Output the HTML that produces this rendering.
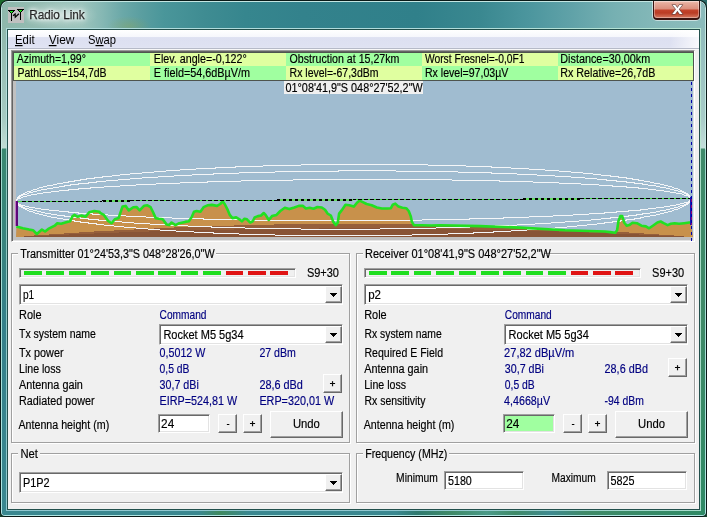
<!DOCTYPE html><html><head><meta charset="utf-8"><title>Radio Link</title><style>
html,body{margin:0;padding:0}
body{width:709px;height:517px;overflow:hidden;background:#fff;position:relative;font-family:"Liberation Sans", Arial, sans-serif;font-size:12.5px}
.a{position:absolute;box-sizing:border-box}
.gb{position:absolute;box-sizing:border-box;border:1px solid #a0a0a0;box-shadow:1px 1px 0 #fff, inset 1px 1px 0 #fff}
.sunk{position:absolute;box-sizing:border-box;background:#fff;border:1px solid;border-color:#a0a0a0 #fff #fff #a0a0a0;box-shadow:inset 1px 1px 0 #696969, inset -1px -1px 0 #e3e3e3}
.btn{position:absolute;box-sizing:border-box;background:#f0f0f0;border:1px solid;border-color:#fff #696969 #696969 #fff;box-shadow:inset -1px -1px 0 #a0a0a0, inset 1px 1px 0 #f0f0f0}
.cap{position:absolute;background:#f0f0f0;height:13px}
svg text{font-family:"Liberation Sans", Arial, sans-serif;white-space:pre}
svg text.m{stroke-width:.18px}
svg text.g{stroke:#000;stroke-width:.5px}
</style></head><body>
<div class="a" style="left:0;top:0;width:707px;height:12px;background:linear-gradient(to right,#1a6a2c 0,#1a6a2c 50%,#2a6a68 50%)"></div>
<div class="a" style="left:0;top:505px;width:707px;height:12px;background:#16402c"></div>
<div class="a" style="left:0;top:0;width:707px;height:517px;border-radius:8px 8px 5px 5px;background:#0a1a18"></div>
<div class="a" style="left:1px;top:1px;width:705px;height:515px;border-radius:7px 7px 4px 4px;background:linear-gradient(to bottom,#c4e6e2 0,#c8eae4 148px,#9fd8cc 149px,#b0e6e4 100%)"></div>
<div class="a" id="glass" style="left:2px;top:2px;width:703px;height:513px;border-radius:6px 6px 3px 3px;overflow:hidden;background:#3a8890">
<div class="a" style="left:0;top:0;width:703px;height:26px;background:radial-gradient(ellipse 22px 10px at 127px 24px, rgba(150,165,70,.32), rgba(150,165,70,0) 100%),radial-gradient(ellipse 40px 14px at 56px 13px, rgba(255,255,255,.35), rgba(255,255,255,0) 100%),linear-gradient(to right,#8eb8ac 0,#94bcb2 5%,#9cc4bc 11.4%,#86b8b4 14.2%,#6aa8a8 17.2%,#5a9ea0 19.9%,#4a969a 23%,#3f8c92 28.9%,#36868e 34.7%,#33828c 42.7%,#30808a 59%,#3a8890 68%,#4c969e 75%,#60a2a8 81%,#76b0b2 87%,#84b8b8 93%,#8cbcbc 100%)"></div>
<div class="a" style="left:0;top:26px;width:6px;height:487px;background:linear-gradient(to bottom,#90b8ac 0,#a6cac2 90px,#c0dcd4 120px,#3a8870 121px,#35808a 300px,#3a8890 100%)"></div>
<div class="a" style="left:697px;top:26px;width:6px;height:487px;background:linear-gradient(to bottom,#90bcbc 0,#a8ccc8 90px,#c4deda 120px,#3f8a6a 121px,#3f8a68 300px,#2f8a66 100%)"></div>
<div class="a" style="left:0;top:507px;width:703px;height:6px;background:linear-gradient(to right,#3a8890 0,#3a8890 28%,#3f8a60 31%,#3a8890 35%,#3a8890 56%,#2f7a70 59%,#3f8a68 64%,#4a9a88 69%,#3f8a68 73%,#3f8a90 78%,#3f8a68 83%,#2f8a66 100%)"></div>
</div>
<div class="a" style="left:6px;top:28px;width:695px;height:483px;background:linear-gradient(to right,rgba(255,255,255,0) 0,rgba(255,255,255,0) 60%,rgba(190,240,200,.5) 100%),linear-gradient(to bottom,#b0dcdc 0,#b8e0dc 120px,#8fc8c0 121px,#90c8d0 100%)"></div>
<div class="a" style="left:7px;top:29px;width:693px;height:481px;background:#23504c"></div>
<div class="a" style="left:8px;top:30px;width:691px;height:479px;background:#f0f0f0"></div>
<div class="a" style="left:652px;top:1px;width:49px;height:20px;border-radius:0 0 5px 5px;background:rgba(255,255,255,.55)"></div>
<div class="a" style="left:653px;top:1px;width:47px;height:19px;border-radius:0 0 4px 4px;background:#3a1410"></div>
<div class="a" style="left:654px;top:1px;width:45px;height:17px;border-radius:0 0 3px 3px;background:linear-gradient(to bottom,#f0c8bc 0,#e6ac9c 12%,#da8e7c 48%,#c4442c 52%,#ba3c24 70%,#d67860 100%);box-shadow:inset 0 0 0 1px rgba(255,255,255,.35)"></div>
<div class="a" style="left:8px;top:30px;width:691px;height:18px;background:linear-gradient(to bottom,#fff 0,#f6f7fc 38%,#dde0f1 42%,#dfe2f2 92%,#e4e6f3 100%)"></div>
<div class="a" style="left:8px;top:48px;width:691px;height:1px;background:#b6bac8"></div>
<div class="a" style="left:8px;top:49px;width:691px;height:1px;background:#f8f8f8"></div>
<div class="a" style="left:670px;top:30px;width:29px;height:18px;background:linear-gradient(to right,rgba(255,255,255,0),rgba(255,255,255,.8))"></div>
<div class="a" style="left:11px;top:50px;width:684px;height:192px;background:#c0c0c0;border:1px solid;border-color:#9a9a9a #fff #fff #9a9a9a;box-shadow:inset 1px 1px 0 #646464, inset -1px -1px 0 #e3e3e3"></div>
<div class="a" style="left:13px;top:52px;width:681px;height:29px;background:#4e544e"></div>
<div class="a" style="left:14px;top:53px;width:136px;height:13px;background:#a0ffa0"></div>
<div class="a" style="left:14px;top:66px;width:136px;height:14px;background:#e0ffa0"></div>
<div class="a" style="left:150px;top:53px;width:136px;height:13px;background:#e0ffa0"></div>
<div class="a" style="left:150px;top:66px;width:136px;height:14px;background:#a0ffa0"></div>
<div class="a" style="left:286px;top:53px;width:135.5px;height:13px;background:#a0ffa0"></div>
<div class="a" style="left:286px;top:66px;width:135.5px;height:14px;background:#e0ffa0"></div>
<div class="a" style="left:421.5px;top:53px;width:136.0px;height:13px;background:#e0ffa0"></div>
<div class="a" style="left:421.5px;top:66px;width:136.0px;height:14px;background:#a0ffa0"></div>
<div class="a" style="left:557.5px;top:53px;width:135.5px;height:13px;background:#a0ffa0"></div>
<div class="a" style="left:557.5px;top:66px;width:135.5px;height:14px;background:#e0ffa0"></div>
<svg width="709" height="517" viewBox="0 0 709 517" style="position:absolute;left:0;top:0">
<defs><clipPath id="cc"><rect x="15" y="81" width="678" height="156"/></clipPath>
<clipPath id="tc"><polygon points="16,237 16.4,226.4 22.8,228.3 29.2,229.6 33.0,230.2 36.8,234.0 41.9,229.6 45.1,231.5 48.3,228.9 54.7,225.7 57.3,223.2 61.1,223.8 66.2,222.3 70.0,221.3 72.6,216.1 74.5,214.9 77.7,216.8 81.5,215.5 85.4,216.8 89.2,212.3 94.3,211.0 99.4,211.7 100.1,213.0 103.9,214.9 107.8,220.6 111.6,223.2 114.8,219.3 118.6,218.1 120.5,212.3 122.5,206.6 125.7,205.9 128.8,210.4 133.3,207.2 136.5,207.0 139.7,210.4 144.2,205.7 147.4,205.3 150.6,207.2 153.1,212.3 155.7,218.1 158.9,218.7 162.7,219.3 166.5,224.4 169.1,225.1 171.6,222.5 175.5,225.1 179.3,223.2 185.1,221.9 188.9,221.3 191.5,217.4 194.0,211.7 196.6,211.0 200.4,211.7 203.6,207.2 207.5,205.3 211.9,204.9 217.0,205.9 220.2,204.0 222.8,201.5 224.7,204.0 227.3,209.1 229.8,214.9 232.4,218.1 236.2,217.4 239.4,219.3 241.9,221.3 244.5,218.7 247.0,219.3 250.2,222.5 252.8,221.3 254.7,217.4 257.9,216.1 261.1,215.5 263.7,213.0 265.6,214.9 268.8,220.0 272.0,216.1 276.5,214.9 280.3,211.0 284.8,207.8 289.3,209.1 294.4,207.5 298.8,205.9 302.7,205.7 305.9,208.5 309.7,207.8 313.5,208.7 317.4,207.0 321.8,207.5 325.0,209.8 327.6,213.6 330.8,215.5 333.3,221.9 335.9,225.1 337.8,222.5 339.1,213.6 341.6,210.4 345.5,204.7 349.3,205.3 353.8,206.6 357.0,202.7 359.6,200.6 362.8,202.1 366.6,204.0 371.7,205.3 376.8,207.5 381.9,208.5 387.0,208.5 390.9,208.2 392.8,204.7 395.3,203.6 398.5,206.6 402.4,207.8 406.2,208.2 408.7,211.0 410.7,216.1 411.9,221.9 413.9,225.1 421.5,225.3 431.7,225.5 440.0,225.2 480.0,226.1 520.0,227.6 565.0,230.2 605.0,231.5 610.1,232.1 615.2,232.7 617.1,230.2 618.4,221.3 620.3,216.1 622.2,216.1 624.2,222.5 626.7,225.7 629.3,225.1 632.5,222.8 636.9,223.2 641.4,225.7 645.9,226.4 649.1,228.3 652.9,225.7 657.4,222.5 660.6,221.5 663.7,223.2 667.6,225.1 670.8,223.8 674.6,223.2 679.1,223.8 684.2,223.2 689.3,222.5 691.0,222.5 693.0,237"/></clipPath></defs>
<rect x="16" y="81" width="677" height="156" fill="#a0bcd0"/>
<g clip-path="url(#cc)">
<polygon points="16,237 16.4,226.4 22.8,228.3 29.2,229.6 33.0,230.2 36.8,234.0 41.9,229.6 45.1,231.5 48.3,228.9 54.7,225.7 57.3,223.2 61.1,223.8 66.2,222.3 70.0,221.3 72.6,216.1 74.5,214.9 77.7,216.8 81.5,215.5 85.4,216.8 89.2,212.3 94.3,211.0 99.4,211.7 100.1,213.0 103.9,214.9 107.8,220.6 111.6,223.2 114.8,219.3 118.6,218.1 120.5,212.3 122.5,206.6 125.7,205.9 128.8,210.4 133.3,207.2 136.5,207.0 139.7,210.4 144.2,205.7 147.4,205.3 150.6,207.2 153.1,212.3 155.7,218.1 158.9,218.7 162.7,219.3 166.5,224.4 169.1,225.1 171.6,222.5 175.5,225.1 179.3,223.2 185.1,221.9 188.9,221.3 191.5,217.4 194.0,211.7 196.6,211.0 200.4,211.7 203.6,207.2 207.5,205.3 211.9,204.9 217.0,205.9 220.2,204.0 222.8,201.5 224.7,204.0 227.3,209.1 229.8,214.9 232.4,218.1 236.2,217.4 239.4,219.3 241.9,221.3 244.5,218.7 247.0,219.3 250.2,222.5 252.8,221.3 254.7,217.4 257.9,216.1 261.1,215.5 263.7,213.0 265.6,214.9 268.8,220.0 272.0,216.1 276.5,214.9 280.3,211.0 284.8,207.8 289.3,209.1 294.4,207.5 298.8,205.9 302.7,205.7 305.9,208.5 309.7,207.8 313.5,208.7 317.4,207.0 321.8,207.5 325.0,209.8 327.6,213.6 330.8,215.5 333.3,221.9 335.9,225.1 337.8,222.5 339.1,213.6 341.6,210.4 345.5,204.7 349.3,205.3 353.8,206.6 357.0,202.7 359.6,200.6 362.8,202.1 366.6,204.0 371.7,205.3 376.8,207.5 381.9,208.5 387.0,208.5 390.9,208.2 392.8,204.7 395.3,203.6 398.5,206.6 402.4,207.8 406.2,208.2 408.7,211.0 410.7,216.1 411.9,221.9 413.9,225.1 421.5,225.3 431.7,225.5 440.0,225.2 480.0,226.1 520.0,227.6 565.0,230.2 605.0,231.5 610.1,232.1 615.2,232.7 617.1,230.2 618.4,221.3 620.3,216.1 622.2,216.1 624.2,222.5 626.7,225.7 629.3,225.1 632.5,222.8 636.9,223.2 641.4,225.7 645.9,226.4 649.1,228.3 652.9,225.7 657.4,222.5 660.6,221.5 663.7,223.2 667.6,225.1 670.8,223.8 674.6,223.2 679.1,223.8 684.2,223.2 689.3,222.5 691.0,222.5 693.0,237" fill="#c8914b"/>
<g clip-path="url(#tc)" shape-rendering="crispEdges"><polygon points="16.0,237 16.0,237 21.0,237 26.0,236 31.0,236 36.0,235 41.0,235 46.0,235 51.0,234 56.0,234 61.0,234 66.0,233 71.0,233 76.0,233 81.0,232 86.0,232 91.0,232 96.0,231 101.0,231 106.0,231 111.0,231 116.0,230 121.0,230 126.0,230 131.0,230 136.0,229 141.0,229 146.0,229 151.0,229 156.0,228 161.0,228 166.0,228 171.0,228 176.0,227 181.0,227 186.0,227 191.0,227 196.0,227 201.0,226 206.0,226 211.0,226 216.0,226 221.0,226 226.0,226 231.0,226 236.0,225 241.0,225 246.0,225 251.0,225 256.0,225 261.0,225 266.0,225 271.0,225 276.0,224 281.0,224 286.0,224 291.0,224 296.0,224 301.0,224 306.0,224 311.0,224 316.0,224 321.0,224 326.0,224 331.0,224 336.0,224 341.0,224 346.0,224 351.0,224 356.0,224 361.0,224 366.0,224 371.0,224 376.0,224 381.0,224 386.0,224 391.0,224 396.0,224 401.0,224 406.0,224 411.0,224 416.0,224 421.0,224 426.0,224 431.0,224 436.0,225 441.0,225 446.0,225 451.0,225 456.0,225 461.0,225 466.0,225 471.0,225 476.0,226 481.0,226 486.0,226 491.0,226 496.0,226 501.0,226 506.0,226 511.0,227 516.0,227 521.0,227 526.0,227 531.0,227 536.0,228 541.0,228 546.0,228 551.0,228 556.0,229 561.0,229 566.0,229 571.0,229 576.0,230 581.0,230 586.0,230 591.0,230 596.0,231 601.0,231 606.0,231 611.0,231 616.0,232 621.0,232 626.0,232 631.0,233 636.0,233 641.0,233 646.0,234 651.0,234 656.0,234 661.0,235 666.0,235 671.0,235 676.0,236 681.0,236 686.0,237 691.0,237 691.0,237" fill="#965f3a"/>
<polygon points="16.0,237 16.0,237 21.0,237 26.0,236 31.0,236 36.0,236 41.0,236 46.0,236 51.0,235 56.0,235 61.0,235 66.0,235 71.0,234 76.0,234 81.0,234 86.0,234 91.0,234 96.0,233 101.0,233 106.0,233 111.0,233 116.0,233 121.0,232 126.0,232 131.0,232 136.0,232 141.0,232 146.0,232 151.0,231 156.0,231 161.0,231 166.0,231 171.0,231 176.0,231 181.0,231 186.0,231 191.0,230 196.0,230 201.0,230 206.0,230 211.0,230 216.0,230 221.0,230 226.0,230 231.0,230 236.0,229 241.0,229 246.0,229 251.0,229 256.0,229 261.0,229 266.0,229 271.0,229 276.0,229 281.0,229 286.0,229 291.0,229 296.0,229 301.0,229 306.0,229 311.0,229 316.0,229 321.0,228 326.0,228 331.0,228 336.0,228 341.0,228 346.0,228 351.0,228 356.0,228 361.0,228 366.0,228 371.0,228 376.0,228 381.0,228 386.0,228 391.0,229 396.0,229 401.0,229 406.0,229 411.0,229 416.0,229 421.0,229 426.0,229 431.0,229 436.0,229 441.0,229 446.0,229 451.0,229 456.0,229 461.0,229 466.0,229 471.0,229 476.0,230 481.0,230 486.0,230 491.0,230 496.0,230 501.0,230 506.0,230 511.0,230 516.0,230 521.0,231 526.0,231 531.0,231 536.0,231 541.0,231 546.0,231 551.0,231 556.0,231 561.0,232 566.0,232 571.0,232 576.0,232 581.0,232 586.0,232 591.0,233 596.0,233 601.0,233 606.0,233 611.0,233 616.0,234 621.0,234 626.0,234 631.0,234 636.0,234 641.0,235 646.0,235 651.0,235 656.0,235 661.0,236 666.0,236 671.0,236 676.0,236 681.0,236 686.0,237 691.0,237 691.0,237" fill="#885436"/></g>
<polyline points="16.0,201.5 18.0,198.5 20.0,198.5 22.0,197.5 23.9,196.5 25.9,196.5 27.9,195.5 29.9,195.5 31.9,194.5 33.9,194.5 35.9,194.5 37.8,193.5 39.8,193.5 41.8,193.5 43.8,192.5 45.8,192.5 47.8,192.5 49.8,192.5 51.7,191.5 53.7,191.5 55.7,191.5 57.7,191.5 59.7,190.5 61.7,190.5 63.6,190.5 65.6,190.5 67.6,190.5 69.6,189.5 71.6,189.5 73.6,189.5 75.6,189.5 77.5,189.5 79.5,188.5 81.5,188.5 83.5,188.5 85.5,188.5 87.5,188.5 89.5,188.5 91.4,187.5 93.4,187.5 95.4,187.5 97.4,187.5 99.4,187.5 101.4,187.5 103.4,187.5 105.3,186.5 107.3,186.5 109.3,186.5 111.3,186.5 113.3,186.5 115.3,186.5 117.2,186.5 119.2,186.5 121.2,185.5 123.2,185.5 125.2,185.5 127.2,185.5 129.2,185.5 131.1,185.5 133.1,185.5 135.1,185.5 137.1,184.5 139.1,184.5 141.1,184.5 143.1,184.5 145.0,184.5 147.0,184.5 149.0,184.5 151.0,184.5 153.0,184.5 155.0,184.5 157.0,183.5 158.9,183.5 160.9,183.5 162.9,183.5 164.9,183.5 166.9,183.5 168.9,183.5 170.9,183.5 172.8,183.5 174.8,183.5 176.8,183.5 178.8,183.5 180.8,182.5 182.8,182.5 184.8,182.5 186.7,182.5 188.7,182.5 190.7,182.5 192.7,182.5 194.7,182.5 196.7,182.5 198.6,182.5 200.6,182.5 202.6,182.5 204.6,182.5 206.6,182.5 208.6,181.5 210.6,181.5 212.5,181.5 214.5,181.5 216.5,181.5 218.5,181.5 220.5,181.5 222.5,181.5 224.5,181.5 226.4,181.5 228.4,181.5 230.4,181.5 232.4,181.5 234.4,181.5 236.4,181.5 238.4,181.5 240.3,181.5 242.3,180.5 244.3,180.5 246.3,180.5 248.3,180.5 250.3,180.5 252.2,180.5 254.2,180.5 256.2,180.5 258.2,180.5 260.2,180.5 262.2,180.5 264.2,180.5 266.1,180.5 268.1,180.5 270.1,180.5 272.1,180.5 274.1,180.5 276.1,180.5 278.1,180.5 280.0,180.5 282.0,180.5 284.0,180.5 286.0,180.5 288.0,180.5 290.0,180.5 292.0,180.5 293.9,179.5 295.9,179.5 297.9,179.5 299.9,179.5 301.9,179.5 303.9,179.5 305.9,179.5 307.8,179.5 309.8,179.5 311.8,179.5 313.8,179.5 315.8,179.5 317.8,179.5 319.8,179.5 321.7,179.5 323.7,179.5 325.7,179.5 327.7,179.5 329.7,179.5 331.7,179.5 333.6,179.5 335.6,179.5 337.6,179.5 339.6,179.5 341.6,179.5 343.6,179.5 345.6,179.5 347.5,179.5 349.5,179.5 351.5,179.5 353.5,179.5 355.5,179.5 357.5,179.5 359.5,179.5 361.4,179.5 363.4,179.5 365.4,179.5 367.4,179.5 369.4,179.5 371.4,179.5 373.4,179.5 375.3,179.5 377.3,179.5 379.3,179.5 381.3,179.5 383.3,179.5 385.3,179.5 387.3,179.5 389.2,179.5 391.2,179.5 393.2,179.5 395.2,179.5 397.2,179.5 399.2,179.5 401.1,179.5 403.1,179.5 405.1,179.5 407.1,179.5 409.1,179.5 411.1,179.5 413.1,179.5 415.0,179.5 417.0,179.5 419.0,179.5 421.0,179.5 423.0,179.5 425.0,179.5 427.0,179.5 428.9,179.5 430.9,179.5 432.9,179.5 434.9,179.5 436.9,179.5 438.9,179.5 440.9,179.5 442.8,179.5 444.8,179.5 446.8,179.5 448.8,179.5 450.8,179.5 452.8,180.5 454.8,180.5 456.7,180.5 458.7,180.5 460.7,180.5 462.7,180.5 464.7,180.5 466.7,180.5 468.6,180.5 470.6,180.5 472.6,180.5 474.6,180.5 476.6,180.5 478.6,180.5 480.6,180.5 482.5,180.5 484.5,180.5 486.5,180.5 488.5,180.5 490.5,180.5 492.5,180.5 494.5,180.5 496.4,180.5 498.4,180.5 500.4,181.5 502.4,181.5 504.4,181.5 506.4,181.5 508.4,181.5 510.3,181.5 512.3,181.5 514.3,181.5 516.3,181.5 518.3,181.5 520.3,181.5 522.2,181.5 524.2,181.5 526.2,181.5 528.2,181.5 530.2,181.5 532.2,181.5 534.2,182.5 536.1,182.5 538.1,182.5 540.1,182.5 542.1,182.5 544.1,182.5 546.1,182.5 548.1,182.5 550.0,182.5 552.0,182.5 554.0,182.5 556.0,182.5 558.0,182.5 560.0,183.5 562.0,183.5 563.9,183.5 565.9,183.5 567.9,183.5 569.9,183.5 571.9,183.5 573.9,183.5 575.9,183.5 577.8,183.5 579.8,183.5 581.8,184.5 583.8,184.5 585.8,184.5 587.8,184.5 589.8,184.5 591.7,184.5 593.7,184.5 595.7,184.5 597.7,184.5 599.7,185.5 601.7,185.5 603.6,185.5 605.6,185.5 607.6,185.5 609.6,185.5 611.6,185.5 613.6,186.5 615.6,186.5 617.5,186.5 619.5,186.5 621.5,186.5 623.5,186.5 625.5,186.5 627.5,187.5 629.5,187.5 631.4,187.5 633.4,187.5 635.4,187.5 637.4,187.5 639.4,188.5 641.4,188.5 643.4,188.5 645.3,188.5 647.3,188.5 649.3,189.5 651.3,189.5 653.3,189.5 655.3,189.5 657.2,190.5 659.2,190.5 661.2,190.5 663.2,190.5 665.2,191.5 667.2,191.5 669.2,191.5 671.1,192.5 673.1,192.5 675.1,192.5 677.1,193.5 679.1,193.5 681.1,193.5 683.1,194.5 685.0,195.5 687.0,195.5 689.0,196.5 691.0,198.5" fill="none" stroke="#f4f6f8" stroke-width="1" shape-rendering="crispEdges"/>
<polyline points="16.0,201.5 18.0,203.5 20.0,204.5 22.0,205.5 23.9,205.5 25.9,206.5 27.9,206.5 29.9,207.5 31.9,207.5 33.9,207.5 35.9,208.5 37.8,208.5 39.8,208.5 41.8,209.5 43.8,209.5 45.8,209.5 47.8,209.5 49.8,210.5 51.7,210.5 53.7,210.5 55.7,210.5 57.7,210.5 59.7,211.5 61.7,211.5 63.6,211.5 65.6,211.5 67.6,211.5 69.6,212.5 71.6,212.5 73.6,212.5 75.6,212.5 77.5,212.5 79.5,213.5 81.5,213.5 83.5,213.5 85.5,213.5 87.5,213.5 89.5,213.5 91.4,213.5 93.4,214.5 95.4,214.5 97.4,214.5 99.4,214.5 101.4,214.5 103.4,214.5 105.3,214.5 107.3,214.5 109.3,215.5 111.3,215.5 113.3,215.5 115.3,215.5 117.2,215.5 119.2,215.5 121.2,215.5 123.2,215.5 125.2,215.5 127.2,216.5 129.2,216.5 131.1,216.5 133.1,216.5 135.1,216.5 137.1,216.5 139.1,216.5 141.1,216.5 143.1,216.5 145.0,216.5 147.0,217.5 149.0,217.5 151.0,217.5 153.0,217.5 155.0,217.5 157.0,217.5 158.9,217.5 160.9,217.5 162.9,217.5 164.9,217.5 166.9,217.5 168.9,217.5 170.9,217.5 172.8,218.5 174.8,218.5 176.8,218.5 178.8,218.5 180.8,218.5 182.8,218.5 184.8,218.5 186.7,218.5 188.7,218.5 190.7,218.5 192.7,218.5 194.7,218.5 196.7,218.5 198.6,218.5 200.6,218.5 202.6,218.5 204.6,219.5 206.6,219.5 208.6,219.5 210.6,219.5 212.5,219.5 214.5,219.5 216.5,219.5 218.5,219.5 220.5,219.5 222.5,219.5 224.5,219.5 226.4,219.5 228.4,219.5 230.4,219.5 232.4,219.5 234.4,219.5 236.4,219.5 238.4,219.5 240.3,219.5 242.3,219.5 244.3,219.5 246.3,219.5 248.3,219.5 250.3,220.5 252.2,220.5 254.2,220.5 256.2,220.5 258.2,220.5 260.2,220.5 262.2,220.5 264.2,220.5 266.1,220.5 268.1,220.5 270.1,220.5 272.1,220.5 274.1,220.5 276.1,220.5 278.1,220.5 280.0,220.5 282.0,220.5 284.0,220.5 286.0,220.5 288.0,220.5 290.0,220.5 292.0,220.5 293.9,220.5 295.9,220.5 297.9,220.5 299.9,220.5 301.9,220.5 303.9,220.5 305.9,220.5 307.8,220.5 309.8,220.5 311.8,220.5 313.8,220.5 315.8,220.5 317.8,220.5 319.8,220.5 321.7,220.5 323.7,220.5 325.7,220.5 327.7,220.5 329.7,220.5 331.7,220.5 333.6,220.5 335.6,220.5 337.6,220.5 339.6,220.5 341.6,220.5 343.6,220.5 345.6,220.5 347.5,220.5 349.5,220.5 351.5,220.5 353.5,220.5 355.5,220.5 357.5,220.5 359.5,220.5 361.4,220.5 363.4,220.5 365.4,220.5 367.4,220.5 369.4,220.5 371.4,220.5 373.4,220.5 375.3,220.5 377.3,220.5 379.3,220.5 381.3,220.5 383.3,220.5 385.3,220.5 387.3,220.5 389.2,220.5 391.2,220.5 393.2,220.5 395.2,220.5 397.2,220.5 399.2,220.5 401.1,220.5 403.1,220.5 405.1,220.5 407.1,220.5 409.1,220.5 411.1,220.5 413.1,220.5 415.0,220.5 417.0,220.5 419.0,220.5 421.0,220.5 423.0,219.5 425.0,219.5 427.0,219.5 428.9,219.5 430.9,219.5 432.9,219.5 434.9,219.5 436.9,219.5 438.9,219.5 440.9,219.5 442.8,219.5 444.8,219.5 446.8,219.5 448.8,219.5 450.8,219.5 452.8,219.5 454.8,219.5 456.7,219.5 458.7,219.5 460.7,219.5 462.7,219.5 464.7,219.5 466.7,219.5 468.6,219.5 470.6,218.5 472.6,218.5 474.6,218.5 476.6,218.5 478.6,218.5 480.6,218.5 482.5,218.5 484.5,218.5 486.5,218.5 488.5,218.5 490.5,218.5 492.5,218.5 494.5,218.5 496.4,218.5 498.4,218.5 500.4,218.5 502.4,218.5 504.4,217.5 506.4,217.5 508.4,217.5 510.3,217.5 512.3,217.5 514.3,217.5 516.3,217.5 518.3,217.5 520.3,217.5 522.2,217.5 524.2,217.5 526.2,217.5 528.2,217.5 530.2,216.5 532.2,216.5 534.2,216.5 536.1,216.5 538.1,216.5 540.1,216.5 542.1,216.5 544.1,216.5 546.1,216.5 548.1,216.5 550.0,216.5 552.0,216.5 554.0,215.5 556.0,215.5 558.0,215.5 560.0,215.5 562.0,215.5 563.9,215.5 565.9,215.5 567.9,215.5 569.9,215.5 571.9,215.5 573.9,214.5 575.9,214.5 577.8,214.5 579.8,214.5 581.8,214.5 583.8,214.5 585.8,214.5 587.8,214.5 589.8,213.5 591.7,213.5 593.7,213.5 595.7,213.5 597.7,213.5 599.7,213.5 601.7,213.5 603.6,213.5 605.6,212.5 607.6,212.5 609.6,212.5 611.6,212.5 613.6,212.5 615.6,212.5 617.5,211.5 619.5,211.5 621.5,211.5 623.5,211.5 625.5,211.5 627.5,211.5 629.5,210.5 631.4,210.5 633.4,210.5 635.4,210.5 637.4,210.5 639.4,210.5 641.4,209.5 643.4,209.5 645.3,209.5 647.3,209.5 649.3,208.5 651.3,208.5 653.3,208.5 655.3,208.5 657.2,207.5 659.2,207.5 661.2,207.5 663.2,207.5 665.2,206.5 667.2,206.5 669.2,206.5 671.1,205.5 673.1,205.5 675.1,205.5 677.1,204.5 679.1,204.5 681.1,203.5 683.1,203.5 685.0,202.5 687.0,202.5 689.0,201.5 691.0,198.5" fill="none" stroke="#f4f6f8" stroke-width="1" shape-rendering="crispEdges"/>
<polyline points="16.0,201.5 18.0,198.5 20.0,196.5 22.0,195.5 23.9,194.5 25.9,194.5 27.9,193.5 29.9,192.5 31.9,192.5 33.9,191.5 35.9,191.5 37.8,190.5 39.8,190.5 41.8,189.5 43.8,189.5 45.8,189.5 47.8,188.5 49.8,188.5 51.7,188.5 53.7,187.5 55.7,187.5 57.7,187.5 59.7,186.5 61.7,186.5 63.6,186.5 65.6,185.5 67.6,185.5 69.6,185.5 71.6,184.5 73.6,184.5 75.6,184.5 77.5,184.5 79.5,183.5 81.5,183.5 83.5,183.5 85.5,183.5 87.5,183.5 89.5,182.5 91.4,182.5 93.4,182.5 95.4,182.5 97.4,181.5 99.4,181.5 101.4,181.5 103.4,181.5 105.3,181.5 107.3,180.5 109.3,180.5 111.3,180.5 113.3,180.5 115.3,180.5 117.2,180.5 119.2,179.5 121.2,179.5 123.2,179.5 125.2,179.5 127.2,179.5 129.2,179.5 131.1,178.5 133.1,178.5 135.1,178.5 137.1,178.5 139.1,178.5 141.1,178.5 143.1,177.5 145.0,177.5 147.0,177.5 149.0,177.5 151.0,177.5 153.0,177.5 155.0,177.5 157.0,177.5 158.9,176.5 160.9,176.5 162.9,176.5 164.9,176.5 166.9,176.5 168.9,176.5 170.9,176.5 172.8,176.5 174.8,175.5 176.8,175.5 178.8,175.5 180.8,175.5 182.8,175.5 184.8,175.5 186.7,175.5 188.7,175.5 190.7,175.5 192.7,174.5 194.7,174.5 196.7,174.5 198.6,174.5 200.6,174.5 202.6,174.5 204.6,174.5 206.6,174.5 208.6,174.5 210.6,174.5 212.5,174.5 214.5,173.5 216.5,173.5 218.5,173.5 220.5,173.5 222.5,173.5 224.5,173.5 226.4,173.5 228.4,173.5 230.4,173.5 232.4,173.5 234.4,173.5 236.4,173.5 238.4,173.5 240.3,172.5 242.3,172.5 244.3,172.5 246.3,172.5 248.3,172.5 250.3,172.5 252.2,172.5 254.2,172.5 256.2,172.5 258.2,172.5 260.2,172.5 262.2,172.5 264.2,172.5 266.1,172.5 268.1,172.5 270.1,172.5 272.1,172.5 274.1,172.5 276.1,171.5 278.1,171.5 280.0,171.5 282.0,171.5 284.0,171.5 286.0,171.5 288.0,171.5 290.0,171.5 292.0,171.5 293.9,171.5 295.9,171.5 297.9,171.5 299.9,171.5 301.9,171.5 303.9,171.5 305.9,171.5 307.8,171.5 309.8,171.5 311.8,171.5 313.8,171.5 315.8,171.5 317.8,171.5 319.8,171.5 321.7,171.5 323.7,171.5 325.7,171.5 327.7,171.5 329.7,171.5 331.7,171.5 333.6,171.5 335.6,171.5 337.6,171.5 339.6,170.5 341.6,170.5 343.6,170.5 345.6,170.5 347.5,170.5 349.5,170.5 351.5,170.5 353.5,170.5 355.5,170.5 357.5,170.5 359.5,170.5 361.4,170.5 363.4,170.5 365.4,170.5 367.4,170.5 369.4,170.5 371.4,170.5 373.4,170.5 375.3,170.5 377.3,170.5 379.3,170.5 381.3,170.5 383.3,170.5 385.3,170.5 387.3,170.5 389.2,170.5 391.2,170.5 393.2,170.5 395.2,170.5 397.2,171.5 399.2,171.5 401.1,171.5 403.1,171.5 405.1,171.5 407.1,171.5 409.1,171.5 411.1,171.5 413.1,171.5 415.0,171.5 417.0,171.5 419.0,171.5 421.0,171.5 423.0,171.5 425.0,171.5 427.0,171.5 428.9,171.5 430.9,171.5 432.9,171.5 434.9,171.5 436.9,171.5 438.9,171.5 440.9,171.5 442.8,171.5 444.8,171.5 446.8,171.5 448.8,171.5 450.8,171.5 452.8,171.5 454.8,171.5 456.7,171.5 458.7,172.5 460.7,172.5 462.7,172.5 464.7,172.5 466.7,172.5 468.6,172.5 470.6,172.5 472.6,172.5 474.6,172.5 476.6,172.5 478.6,172.5 480.6,172.5 482.5,172.5 484.5,172.5 486.5,172.5 488.5,172.5 490.5,172.5 492.5,173.5 494.5,173.5 496.4,173.5 498.4,173.5 500.4,173.5 502.4,173.5 504.4,173.5 506.4,173.5 508.4,173.5 510.3,173.5 512.3,173.5 514.3,173.5 516.3,173.5 518.3,174.5 520.3,174.5 522.2,174.5 524.2,174.5 526.2,174.5 528.2,174.5 530.2,174.5 532.2,174.5 534.2,174.5 536.1,174.5 538.1,175.5 540.1,175.5 542.1,175.5 544.1,175.5 546.1,175.5 548.1,175.5 550.0,175.5 552.0,175.5 554.0,175.5 556.0,176.5 558.0,176.5 560.0,176.5 562.0,176.5 563.9,176.5 565.9,176.5 567.9,176.5 569.9,176.5 571.9,177.5 573.9,177.5 575.9,177.5 577.8,177.5 579.8,177.5 581.8,177.5 583.8,177.5 585.8,178.5 587.8,178.5 589.8,178.5 591.7,178.5 593.7,178.5 595.7,178.5 597.7,179.5 599.7,179.5 601.7,179.5 603.6,179.5 605.6,179.5 607.6,180.5 609.6,180.5 611.6,180.5 613.6,180.5 615.6,180.5 617.5,181.5 619.5,181.5 621.5,181.5 623.5,181.5 625.5,181.5 627.5,182.5 629.5,182.5 631.4,182.5 633.4,182.5 635.4,183.5 637.4,183.5 639.4,183.5 641.4,183.5 643.4,184.5 645.3,184.5 647.3,184.5 649.3,185.5 651.3,185.5 653.3,185.5 655.3,185.5 657.2,186.5 659.2,186.5 661.2,187.5 663.2,187.5 665.2,187.5 667.2,188.5 669.2,188.5 671.1,189.5 673.1,189.5 675.1,190.5 677.1,190.5 679.1,191.5 681.1,191.5 683.1,192.5 685.0,193.5 687.0,194.5 689.0,195.5 691.0,198.5" fill="none" stroke="#f4f6f8" stroke-width="1" shape-rendering="crispEdges"/>
<polyline points="16.0,201.5 18.0,204.5 20.0,205.5 22.0,206.5 23.9,207.5 25.9,208.5 27.9,208.5 29.9,209.5 31.9,209.5 33.9,210.5 35.9,210.5 37.8,211.5 39.8,211.5 41.8,212.5 43.8,212.5 45.8,213.5 47.8,213.5 49.8,213.5 51.7,214.5 53.7,214.5 55.7,214.5 57.7,215.5 59.7,215.5 61.7,215.5 63.6,215.5 65.6,216.5 67.6,216.5 69.6,216.5 71.6,217.5 73.6,217.5 75.6,217.5 77.5,217.5 79.5,217.5 81.5,218.5 83.5,218.5 85.5,218.5 87.5,218.5 89.5,219.5 91.4,219.5 93.4,219.5 95.4,219.5 97.4,219.5 99.4,220.5 101.4,220.5 103.4,220.5 105.3,220.5 107.3,220.5 109.3,220.5 111.3,221.5 113.3,221.5 115.3,221.5 117.2,221.5 119.2,221.5 121.2,221.5 123.2,222.5 125.2,222.5 127.2,222.5 129.2,222.5 131.1,222.5 133.1,222.5 135.1,223.5 137.1,223.5 139.1,223.5 141.1,223.5 143.1,223.5 145.0,223.5 147.0,223.5 149.0,223.5 151.0,224.5 153.0,224.5 155.0,224.5 157.0,224.5 158.9,224.5 160.9,224.5 162.9,224.5 164.9,224.5 166.9,224.5 168.9,225.5 170.9,225.5 172.8,225.5 174.8,225.5 176.8,225.5 178.8,225.5 180.8,225.5 182.8,225.5 184.8,225.5 186.7,225.5 188.7,226.5 190.7,226.5 192.7,226.5 194.7,226.5 196.7,226.5 198.6,226.5 200.6,226.5 202.6,226.5 204.6,226.5 206.6,226.5 208.6,226.5 210.6,226.5 212.5,227.5 214.5,227.5 216.5,227.5 218.5,227.5 220.5,227.5 222.5,227.5 224.5,227.5 226.4,227.5 228.4,227.5 230.4,227.5 232.4,227.5 234.4,227.5 236.4,227.5 238.4,227.5 240.3,227.5 242.3,227.5 244.3,227.5 246.3,228.5 248.3,228.5 250.3,228.5 252.2,228.5 254.2,228.5 256.2,228.5 258.2,228.5 260.2,228.5 262.2,228.5 264.2,228.5 266.1,228.5 268.1,228.5 270.1,228.5 272.1,228.5 274.1,228.5 276.1,228.5 278.1,228.5 280.0,228.5 282.0,228.5 284.0,228.5 286.0,228.5 288.0,228.5 290.0,228.5 292.0,228.5 293.9,228.5 295.9,228.5 297.9,228.5 299.9,228.5 301.9,229.5 303.9,229.5 305.9,229.5 307.8,229.5 309.8,229.5 311.8,229.5 313.8,229.5 315.8,229.5 317.8,229.5 319.8,229.5 321.7,229.5 323.7,229.5 325.7,229.5 327.7,229.5 329.7,229.5 331.7,229.5 333.6,229.5 335.6,229.5 337.6,229.5 339.6,229.5 341.6,229.5 343.6,229.5 345.6,229.5 347.5,229.5 349.5,229.5 351.5,229.5 353.5,229.5 355.5,229.5 357.5,229.5 359.5,229.5 361.4,229.5 363.4,229.5 365.4,229.5 367.4,229.5 369.4,229.5 371.4,229.5 373.4,229.5 375.3,229.5 377.3,229.5 379.3,229.5 381.3,228.5 383.3,228.5 385.3,228.5 387.3,228.5 389.2,228.5 391.2,228.5 393.2,228.5 395.2,228.5 397.2,228.5 399.2,228.5 401.1,228.5 403.1,228.5 405.1,228.5 407.1,228.5 409.1,228.5 411.1,228.5 413.1,228.5 415.0,228.5 417.0,228.5 419.0,228.5 421.0,228.5 423.0,228.5 425.0,228.5 427.0,228.5 428.9,228.5 430.9,228.5 432.9,228.5 434.9,228.5 436.9,227.5 438.9,227.5 440.9,227.5 442.8,227.5 444.8,227.5 446.8,227.5 448.8,227.5 450.8,227.5 452.8,227.5 454.8,227.5 456.7,227.5 458.7,227.5 460.7,227.5 462.7,227.5 464.7,227.5 466.7,227.5 468.6,227.5 470.6,226.5 472.6,226.5 474.6,226.5 476.6,226.5 478.6,226.5 480.6,226.5 482.5,226.5 484.5,226.5 486.5,226.5 488.5,226.5 490.5,226.5 492.5,226.5 494.5,226.5 496.4,225.5 498.4,225.5 500.4,225.5 502.4,225.5 504.4,225.5 506.4,225.5 508.4,225.5 510.3,225.5 512.3,225.5 514.3,225.5 516.3,225.5 518.3,224.5 520.3,224.5 522.2,224.5 524.2,224.5 526.2,224.5 528.2,224.5 530.2,224.5 532.2,224.5 534.2,224.5 536.1,223.5 538.1,223.5 540.1,223.5 542.1,223.5 544.1,223.5 546.1,223.5 548.1,223.5 550.0,223.5 552.0,222.5 554.0,222.5 556.0,222.5 558.0,222.5 560.0,222.5 562.0,222.5 563.9,222.5 565.9,221.5 567.9,221.5 569.9,221.5 571.9,221.5 573.9,221.5 575.9,221.5 577.8,221.5 579.8,220.5 581.8,220.5 583.8,220.5 585.8,220.5 587.8,220.5 589.8,220.5 591.7,219.5 593.7,219.5 595.7,219.5 597.7,219.5 599.7,219.5 601.7,218.5 603.6,218.5 605.6,218.5 607.6,218.5 609.6,218.5 611.6,217.5 613.6,217.5 615.6,217.5 617.5,217.5 619.5,217.5 621.5,216.5 623.5,216.5 625.5,216.5 627.5,216.5 629.5,215.5 631.4,215.5 633.4,215.5 635.4,215.5 637.4,214.5 639.4,214.5 641.4,214.5 643.4,213.5 645.3,213.5 647.3,213.5 649.3,213.5 651.3,212.5 653.3,212.5 655.3,212.5 657.2,211.5 659.2,211.5 661.2,210.5 663.2,210.5 665.2,210.5 667.2,209.5 669.2,209.5 671.1,208.5 673.1,208.5 675.1,207.5 677.1,207.5 679.1,206.5 681.1,205.5 683.1,205.5 685.0,204.5 687.0,203.5 689.0,202.5 691.0,198.5" fill="none" stroke="#f4f6f8" stroke-width="1" shape-rendering="crispEdges"/>
<polyline points="16.0,201.5 18.0,197.5 20.0,195.5 22.0,194.5 23.9,193.5 25.9,192.5 27.9,191.5 29.9,191.5 31.9,190.5 33.9,189.5 35.9,189.5 37.8,188.5 39.8,187.5 41.8,187.5 43.8,186.5 45.8,186.5 47.8,185.5 49.8,185.5 51.7,185.5 53.7,184.5 55.7,184.5 57.7,183.5 59.7,183.5 61.7,183.5 63.6,182.5 65.6,182.5 67.6,182.5 69.6,181.5 71.6,181.5 73.6,181.5 75.6,180.5 77.5,180.5 79.5,180.5 81.5,179.5 83.5,179.5 85.5,179.5 87.5,178.5 89.5,178.5 91.4,178.5 93.4,178.5 95.4,177.5 97.4,177.5 99.4,177.5 101.4,177.5 103.4,176.5 105.3,176.5 107.3,176.5 109.3,176.5 111.3,176.5 113.3,175.5 115.3,175.5 117.2,175.5 119.2,175.5 121.2,174.5 123.2,174.5 125.2,174.5 127.2,174.5 129.2,174.5 131.1,173.5 133.1,173.5 135.1,173.5 137.1,173.5 139.1,173.5 141.1,173.5 143.1,172.5 145.0,172.5 147.0,172.5 149.0,172.5 151.0,172.5 153.0,172.5 155.0,171.5 157.0,171.5 158.9,171.5 160.9,171.5 162.9,171.5 164.9,171.5 166.9,170.5 168.9,170.5 170.9,170.5 172.8,170.5 174.8,170.5 176.8,170.5 178.8,170.5 180.8,169.5 182.8,169.5 184.8,169.5 186.7,169.5 188.7,169.5 190.7,169.5 192.7,169.5 194.7,169.5 196.7,168.5 198.6,168.5 200.6,168.5 202.6,168.5 204.6,168.5 206.6,168.5 208.6,168.5 210.6,168.5 212.5,168.5 214.5,168.5 216.5,167.5 218.5,167.5 220.5,167.5 222.5,167.5 224.5,167.5 226.4,167.5 228.4,167.5 230.4,167.5 232.4,167.5 234.4,167.5 236.4,166.5 238.4,166.5 240.3,166.5 242.3,166.5 244.3,166.5 246.3,166.5 248.3,166.5 250.3,166.5 252.2,166.5 254.2,166.5 256.2,166.5 258.2,166.5 260.2,166.5 262.2,166.5 264.2,165.5 266.1,165.5 268.1,165.5 270.1,165.5 272.1,165.5 274.1,165.5 276.1,165.5 278.1,165.5 280.0,165.5 282.0,165.5 284.0,165.5 286.0,165.5 288.0,165.5 290.0,165.5 292.0,165.5 293.9,165.5 295.9,165.5 297.9,165.5 299.9,165.5 301.9,164.5 303.9,164.5 305.9,164.5 307.8,164.5 309.8,164.5 311.8,164.5 313.8,164.5 315.8,164.5 317.8,164.5 319.8,164.5 321.7,164.5 323.7,164.5 325.7,164.5 327.7,164.5 329.7,164.5 331.7,164.5 333.6,164.5 335.6,164.5 337.6,164.5 339.6,164.5 341.6,164.5 343.6,164.5 345.6,164.5 347.5,164.5 349.5,164.5 351.5,164.5 353.5,164.5 355.5,164.5 357.5,164.5 359.5,164.5 361.4,164.5 363.4,164.5 365.4,164.5 367.4,164.5 369.4,164.5 371.4,164.5 373.4,164.5 375.3,164.5 377.3,164.5 379.3,164.5 381.3,164.5 383.3,164.5 385.3,164.5 387.3,164.5 389.2,164.5 391.2,164.5 393.2,164.5 395.2,164.5 397.2,164.5 399.2,164.5 401.1,164.5 403.1,164.5 405.1,164.5 407.1,164.5 409.1,164.5 411.1,164.5 413.1,164.5 415.0,164.5 417.0,164.5 419.0,164.5 421.0,164.5 423.0,164.5 425.0,164.5 427.0,164.5 428.9,165.5 430.9,165.5 432.9,165.5 434.9,165.5 436.9,165.5 438.9,165.5 440.9,165.5 442.8,165.5 444.8,165.5 446.8,165.5 448.8,165.5 450.8,165.5 452.8,165.5 454.8,165.5 456.7,165.5 458.7,165.5 460.7,165.5 462.7,165.5 464.7,165.5 466.7,166.5 468.6,166.5 470.6,166.5 472.6,166.5 474.6,166.5 476.6,166.5 478.6,166.5 480.6,166.5 482.5,166.5 484.5,166.5 486.5,166.5 488.5,166.5 490.5,166.5 492.5,167.5 494.5,167.5 496.4,167.5 498.4,167.5 500.4,167.5 502.4,167.5 504.4,167.5 506.4,167.5 508.4,167.5 510.3,167.5 512.3,168.5 514.3,168.5 516.3,168.5 518.3,168.5 520.3,168.5 522.2,168.5 524.2,168.5 526.2,168.5 528.2,168.5 530.2,169.5 532.2,169.5 534.2,169.5 536.1,169.5 538.1,169.5 540.1,169.5 542.1,169.5 544.1,169.5 546.1,170.5 548.1,170.5 550.0,170.5 552.0,170.5 554.0,170.5 556.0,170.5 558.0,170.5 560.0,171.5 562.0,171.5 563.9,171.5 565.9,171.5 567.9,171.5 569.9,171.5 571.9,172.5 573.9,172.5 575.9,172.5 577.8,172.5 579.8,172.5 581.8,172.5 583.8,173.5 585.8,173.5 587.8,173.5 589.8,173.5 591.7,173.5 593.7,174.5 595.7,174.5 597.7,174.5 599.7,174.5 601.7,175.5 603.6,175.5 605.6,175.5 607.6,175.5 609.6,175.5 611.6,176.5 613.6,176.5 615.6,176.5 617.5,176.5 619.5,177.5 621.5,177.5 623.5,177.5 625.5,177.5 627.5,178.5 629.5,178.5 631.4,178.5 633.4,179.5 635.4,179.5 637.4,179.5 639.4,180.5 641.4,180.5 643.4,180.5 645.3,181.5 647.3,181.5 649.3,181.5 651.3,182.5 653.3,182.5 655.3,183.5 657.2,183.5 659.2,183.5 661.2,184.5 663.2,184.5 665.2,185.5 667.2,185.5 669.2,186.5 671.1,186.5 673.1,187.5 675.1,188.5 677.1,188.5 679.1,189.5 681.1,190.5 683.1,191.5 685.0,192.5 687.0,193.5 689.0,195.5 691.0,198.5" fill="none" stroke="#f4f6f8" stroke-width="1" shape-rendering="crispEdges"/>
<polyline points="16.0,201.5 18.0,205.5 20.0,206.5 22.0,207.5 23.9,208.5 25.9,209.5 27.9,210.5 29.9,211.5 31.9,211.5 33.9,212.5 35.9,213.5 37.8,213.5 39.8,214.5 41.8,214.5 43.8,215.5 45.8,215.5 47.8,216.5 49.8,216.5 51.7,217.5 53.7,217.5 55.7,217.5 57.7,218.5 59.7,218.5 61.7,218.5 63.6,219.5 65.6,219.5 67.6,219.5 69.6,220.5 71.6,220.5 73.6,220.5 75.6,221.5 77.5,221.5 79.5,221.5 81.5,222.5 83.5,222.5 85.5,222.5 87.5,222.5 89.5,223.5 91.4,223.5 93.4,223.5 95.4,223.5 97.4,224.5 99.4,224.5 101.4,224.5 103.4,224.5 105.3,225.5 107.3,225.5 109.3,225.5 111.3,225.5 113.3,225.5 115.3,226.5 117.2,226.5 119.2,226.5 121.2,226.5 123.2,226.5 125.2,227.5 127.2,227.5 129.2,227.5 131.1,227.5 133.1,227.5 135.1,227.5 137.1,228.5 139.1,228.5 141.1,228.5 143.1,228.5 145.0,228.5 147.0,228.5 149.0,229.5 151.0,229.5 153.0,229.5 155.0,229.5 157.0,229.5 158.9,229.5 160.9,230.5 162.9,230.5 164.9,230.5 166.9,230.5 168.9,230.5 170.9,230.5 172.8,230.5 174.8,230.5 176.8,231.5 178.8,231.5 180.8,231.5 182.8,231.5 184.8,231.5 186.7,231.5 188.7,231.5 190.7,231.5 192.7,231.5 194.7,232.5 196.7,232.5 198.6,232.5 200.6,232.5 202.6,232.5 204.6,232.5 206.6,232.5 208.6,232.5 210.6,232.5 212.5,232.5 214.5,233.5 216.5,233.5 218.5,233.5 220.5,233.5 222.5,233.5 224.5,233.5 226.4,233.5 228.4,233.5 230.4,233.5 232.4,233.5 234.4,233.5 236.4,233.5 238.4,233.5 240.3,234.5 242.3,234.5 244.3,234.5 246.3,234.5 248.3,234.5 250.3,234.5 252.2,234.5 254.2,234.5 256.2,234.5 258.2,234.5 260.2,234.5 262.2,234.5 264.2,234.5 266.1,234.5 268.1,234.5 270.1,234.5 272.1,234.5 274.1,234.5 276.1,235.5 278.1,235.5 280.0,235.5 282.0,235.5 284.0,235.5 286.0,235.5 288.0,235.5 290.0,235.5 292.0,235.5 293.9,235.5 295.9,235.5 297.9,235.5 299.9,235.5 301.9,235.5 303.9,235.5 305.9,235.5 307.8,235.5 309.8,235.5 311.8,235.5 313.8,235.5 315.8,235.5 317.8,235.5 319.8,235.5 321.7,235.5 323.7,235.5 325.7,235.5 327.7,235.5 329.7,235.5 331.7,235.5 333.6,235.5 335.6,235.5 337.6,235.5 339.6,235.5 341.6,235.5 343.6,235.5 345.6,235.5 347.5,235.5 349.5,235.5 351.5,235.5 353.5,235.5 355.5,235.5 357.5,235.5 359.5,235.5 361.4,235.5 363.4,235.5 365.4,235.5 367.4,235.5 369.4,235.5 371.4,235.5 373.4,235.5 375.3,235.5 377.3,235.5 379.3,235.5 381.3,235.5 383.3,235.5 385.3,235.5 387.3,235.5 389.2,235.5 391.2,235.5 393.2,235.5 395.2,235.5 397.2,235.5 399.2,235.5 401.1,235.5 403.1,235.5 405.1,235.5 407.1,235.5 409.1,235.5 411.1,235.5 413.1,234.5 415.0,234.5 417.0,234.5 419.0,234.5 421.0,234.5 423.0,234.5 425.0,234.5 427.0,234.5 428.9,234.5 430.9,234.5 432.9,234.5 434.9,234.5 436.9,234.5 438.9,234.5 440.9,234.5 442.8,234.5 444.8,234.5 446.8,234.5 448.8,233.5 450.8,233.5 452.8,233.5 454.8,233.5 456.7,233.5 458.7,233.5 460.7,233.5 462.7,233.5 464.7,233.5 466.7,233.5 468.6,233.5 470.6,233.5 472.6,233.5 474.6,232.5 476.6,232.5 478.6,232.5 480.6,232.5 482.5,232.5 484.5,232.5 486.5,232.5 488.5,232.5 490.5,232.5 492.5,232.5 494.5,231.5 496.4,231.5 498.4,231.5 500.4,231.5 502.4,231.5 504.4,231.5 506.4,231.5 508.4,231.5 510.3,231.5 512.3,230.5 514.3,230.5 516.3,230.5 518.3,230.5 520.3,230.5 522.2,230.5 524.2,230.5 526.2,230.5 528.2,229.5 530.2,229.5 532.2,229.5 534.2,229.5 536.1,229.5 538.1,229.5 540.1,229.5 542.1,228.5 544.1,228.5 546.1,228.5 548.1,228.5 550.0,228.5 552.0,228.5 554.0,228.5 556.0,227.5 558.0,227.5 560.0,227.5 562.0,227.5 563.9,227.5 565.9,227.5 567.9,226.5 569.9,226.5 571.9,226.5 573.9,226.5 575.9,226.5 577.8,225.5 579.8,225.5 581.8,225.5 583.8,225.5 585.8,225.5 587.8,224.5 589.8,224.5 591.7,224.5 593.7,224.5 595.7,224.5 597.7,223.5 599.7,223.5 601.7,223.5 603.6,223.5 605.6,222.5 607.6,222.5 609.6,222.5 611.6,222.5 613.6,221.5 615.6,221.5 617.5,221.5 619.5,221.5 621.5,220.5 623.5,220.5 625.5,220.5 627.5,219.5 629.5,219.5 631.4,219.5 633.4,219.5 635.4,218.5 637.4,218.5 639.4,218.5 641.4,217.5 643.4,217.5 645.3,216.5 647.3,216.5 649.3,216.5 651.3,215.5 653.3,215.5 655.3,215.5 657.2,214.5 659.2,214.5 661.2,213.5 663.2,213.5 665.2,212.5 667.2,212.5 669.2,211.5 671.1,211.5 673.1,210.5 675.1,209.5 677.1,209.5 679.1,208.5 681.1,207.5 683.1,206.5 685.0,205.5 687.0,204.5 689.0,202.5 691.0,198.5" fill="none" stroke="#f4f6f8" stroke-width="1" shape-rendering="crispEdges"/>
<polyline points="16.4,226.4 22.8,228.3 29.2,229.6 33.0,230.2 36.8,234.0 41.9,229.6 45.1,231.5 48.3,228.9 54.7,225.7 57.3,223.2 61.1,223.8 66.2,222.3 70.0,221.3 72.6,216.1 74.5,214.9 77.7,216.8 81.5,215.5 85.4,216.8 89.2,212.3 94.3,211.0 99.4,211.7 100.1,213.0 103.9,214.9 107.8,220.6 111.6,223.2 114.8,219.3 118.6,218.1 120.5,212.3 122.5,206.6 125.7,205.9 128.8,210.4 133.3,207.2 136.5,207.0 139.7,210.4 144.2,205.7 147.4,205.3 150.6,207.2 153.1,212.3 155.7,218.1 158.9,218.7 162.7,219.3 166.5,224.4 169.1,225.1 171.6,222.5 175.5,225.1 179.3,223.2 185.1,221.9 188.9,221.3 191.5,217.4 194.0,211.7 196.6,211.0 200.4,211.7 203.6,207.2 207.5,205.3 211.9,204.9 217.0,205.9 220.2,204.0 222.8,201.5 224.7,204.0 227.3,209.1 229.8,214.9 232.4,218.1 236.2,217.4 239.4,219.3 241.9,221.3 244.5,218.7 247.0,219.3 250.2,222.5 252.8,221.3 254.7,217.4 257.9,216.1 261.1,215.5 263.7,213.0 265.6,214.9 268.8,220.0 272.0,216.1 276.5,214.9 280.3,211.0 284.8,207.8 289.3,209.1 294.4,207.5 298.8,205.9 302.7,205.7 305.9,208.5 309.7,207.8 313.5,208.7 317.4,207.0 321.8,207.5 325.0,209.8 327.6,213.6 330.8,215.5 333.3,221.9 335.9,225.1 337.8,222.5 339.1,213.6 341.6,210.4 345.5,204.7 349.3,205.3 353.8,206.6 357.0,202.7 359.6,200.6 362.8,202.1 366.6,204.0 371.7,205.3 376.8,207.5 381.9,208.5 387.0,208.5 390.9,208.2 392.8,204.7 395.3,203.6 398.5,206.6 402.4,207.8 406.2,208.2 408.7,211.0 410.7,216.1 411.9,221.9 413.9,225.1 421.5,225.3 431.7,225.5 440.0,225.2 480.0,226.1 520.0,227.6 565.0,230.2 605.0,231.5 610.1,232.1 615.2,232.7 617.1,230.2 618.4,221.3 620.3,216.1 622.2,216.1 624.2,222.5 626.7,225.7 629.3,225.1 632.5,222.8 636.9,223.2 641.4,225.7 645.9,226.4 649.1,228.3 652.9,225.7 657.4,222.5 660.6,221.5 663.7,223.2 667.6,225.1 670.8,223.8 674.6,223.2 679.1,223.8 684.2,223.2 689.3,222.5 691.0,222.5" fill="none" stroke="#22e022" stroke-width="2.6" stroke-linejoin="round"/>
<rect x="16" y="201" width="6" height="1" fill="#40e040"/>
<rect x="22" y="201" width="4" height="1" fill="#000"/>
<rect x="26" y="201" width="2" height="1" fill="#40e040"/>
<rect x="28" y="201" width="4" height="1" fill="#000"/>
<rect x="32" y="201" width="2" height="1" fill="#40e040"/>
<rect x="34" y="201" width="4" height="1" fill="#000"/>
<rect x="38" y="201" width="2" height="1" fill="#40e040"/>
<rect x="40" y="201" width="4" height="1" fill="#000"/>
<rect x="44" y="201" width="2" height="1" fill="#40e040"/>
<rect x="46" y="201" width="4" height="1" fill="#000"/>
<rect x="50" y="201" width="2" height="1" fill="#40e040"/>
<rect x="52" y="201" width="4" height="1" fill="#000"/>
<rect x="56" y="201" width="2" height="1" fill="#40e040"/>
<rect x="58" y="201" width="4" height="1" fill="#000"/>
<rect x="62" y="201" width="2" height="1" fill="#40e040"/>
<rect x="64" y="201" width="4" height="1" fill="#000"/>
<rect x="68" y="201" width="2" height="1" fill="#40e040"/>
<rect x="70" y="201" width="4" height="1" fill="#000"/>
<rect x="74" y="201" width="2" height="1" fill="#40e040"/>
<rect x="76" y="201" width="4" height="1" fill="#000"/>
<rect x="80" y="201" width="2" height="1" fill="#40e040"/>
<rect x="82" y="201" width="4" height="1" fill="#000"/>
<rect x="86" y="201" width="2" height="1" fill="#40e040"/>
<rect x="88" y="201" width="4" height="1" fill="#000"/>
<rect x="92" y="201" width="2" height="1" fill="#40e040"/>
<rect x="94" y="201" width="4" height="1" fill="#000"/>
<rect x="98" y="201" width="2" height="1" fill="#40e040"/>
<rect x="100" y="201" width="2" height="1" fill="#000"/>
<rect x="102" y="200" width="1" height="1" fill="#000"/>
<rect x="103" y="200" width="3" height="2" fill="#000"/>
<rect x="106" y="200" width="3" height="2" fill="#62dc62"/>
<rect x="109" y="200" width="3" height="2" fill="#000"/>
<rect x="112" y="200" width="3" height="2" fill="#62dc62"/>
<rect x="115" y="200" width="3" height="2" fill="#000"/>
<rect x="118" y="200" width="3" height="2" fill="#62dc62"/>
<rect x="121" y="200" width="3" height="2" fill="#000"/>
<rect x="124" y="200" width="3" height="2" fill="#62dc62"/>
<rect x="127" y="200" width="3" height="2" fill="#000"/>
<rect x="130" y="200" width="4" height="1" fill="#000"/>
<rect x="134" y="200" width="2" height="1" fill="#40e040"/>
<rect x="136" y="200" width="4" height="1" fill="#000"/>
<rect x="140" y="200" width="2" height="1" fill="#40e040"/>
<rect x="142" y="200" width="4" height="1" fill="#000"/>
<rect x="146" y="200" width="2" height="1" fill="#40e040"/>
<rect x="148" y="200" width="4" height="1" fill="#000"/>
<rect x="152" y="200" width="2" height="1" fill="#40e040"/>
<rect x="154" y="200" width="4" height="1" fill="#000"/>
<rect x="158" y="200" width="2" height="1" fill="#40e040"/>
<rect x="160" y="200" width="4" height="1" fill="#000"/>
<rect x="164" y="200" width="2" height="1" fill="#40e040"/>
<rect x="166" y="200" width="4" height="1" fill="#000"/>
<rect x="170" y="200" width="2" height="1" fill="#40e040"/>
<rect x="172" y="200" width="4" height="1" fill="#000"/>
<rect x="176" y="200" width="2" height="1" fill="#40e040"/>
<rect x="178" y="200" width="4" height="1" fill="#000"/>
<rect x="182" y="200" width="2" height="1" fill="#40e040"/>
<rect x="184" y="200" width="4" height="1" fill="#000"/>
<rect x="188" y="200" width="2" height="1" fill="#40e040"/>
<rect x="190" y="200" width="4" height="1" fill="#000"/>
<rect x="194" y="200" width="2" height="1" fill="#40e040"/>
<rect x="196" y="200" width="4" height="1" fill="#000"/>
<rect x="200" y="200" width="2" height="1" fill="#40e040"/>
<rect x="202" y="200" width="4" height="1" fill="#000"/>
<rect x="206" y="200" width="2" height="1" fill="#40e040"/>
<rect x="208" y="200" width="4" height="1" fill="#000"/>
<rect x="212" y="200" width="2" height="1" fill="#40e040"/>
<rect x="214" y="200" width="4" height="1" fill="#000"/>
<rect x="218" y="200" width="2" height="1" fill="#40e040"/>
<rect x="220" y="200" width="4" height="1" fill="#000"/>
<rect x="224" y="200" width="2" height="1" fill="#40e040"/>
<rect x="226" y="200" width="4" height="1" fill="#000"/>
<rect x="230" y="200" width="2" height="1" fill="#40e040"/>
<rect x="232" y="200" width="4" height="1" fill="#000"/>
<rect x="236" y="200" width="2" height="1" fill="#40e040"/>
<rect x="238" y="200" width="4" height="1" fill="#000"/>
<rect x="242" y="200" width="2" height="1" fill="#40e040"/>
<rect x="244" y="200" width="4" height="1" fill="#000"/>
<rect x="248" y="200" width="2" height="1" fill="#40e040"/>
<rect x="250" y="200" width="4" height="1" fill="#000"/>
<rect x="254" y="200" width="2" height="1" fill="#40e040"/>
<rect x="256" y="200" width="4" height="1" fill="#000"/>
<rect x="260" y="200" width="2" height="1" fill="#40e040"/>
<rect x="262" y="200" width="4" height="1" fill="#000"/>
<rect x="266" y="200" width="2" height="1" fill="#40e040"/>
<rect x="268" y="200" width="4" height="1" fill="#000"/>
<rect x="272" y="200" width="2" height="1" fill="#40e040"/>
<rect x="274" y="200" width="3" height="1" fill="#000"/>
<rect x="277" y="199" width="3" height="2" fill="#000"/>
<rect x="280" y="199" width="3" height="2" fill="#62dc62"/>
<rect x="283" y="199" width="3" height="2" fill="#000"/>
<rect x="286" y="199" width="3" height="2" fill="#62dc62"/>
<rect x="289" y="199" width="3" height="2" fill="#000"/>
<rect x="292" y="199" width="3" height="2" fill="#62dc62"/>
<rect x="295" y="199" width="3" height="2" fill="#000"/>
<rect x="298" y="199" width="3" height="2" fill="#62dc62"/>
<rect x="301" y="199" width="3" height="2" fill="#000"/>
<rect x="304" y="199" width="3" height="2" fill="#62dc62"/>
<rect x="307" y="199" width="3" height="2" fill="#000"/>
<rect x="310" y="199" width="3" height="2" fill="#62dc62"/>
<rect x="313" y="199" width="3" height="2" fill="#000"/>
<rect x="316" y="199" width="3" height="2" fill="#62dc62"/>
<rect x="319" y="199" width="3" height="2" fill="#000"/>
<rect x="322" y="199" width="3" height="2" fill="#62dc62"/>
<rect x="325" y="199" width="3" height="2" fill="#000"/>
<rect x="328" y="199" width="3" height="2" fill="#62dc62"/>
<rect x="331" y="199" width="3" height="2" fill="#000"/>
<rect x="334" y="199" width="3" height="2" fill="#62dc62"/>
<rect x="337" y="199" width="3" height="2" fill="#000"/>
<rect x="340" y="199" width="3" height="2" fill="#62dc62"/>
<rect x="343" y="199" width="3" height="2" fill="#000"/>
<rect x="346" y="199" width="3" height="2" fill="#62dc62"/>
<rect x="349" y="199" width="3" height="2" fill="#000"/>
<rect x="352" y="199" width="1" height="2" fill="#62dc62"/>
<rect x="353" y="199" width="3" height="1" fill="#000"/>
<rect x="356" y="199" width="2" height="1" fill="#40e040"/>
<rect x="358" y="199" width="4" height="1" fill="#000"/>
<rect x="362" y="199" width="2" height="1" fill="#40e040"/>
<rect x="364" y="199" width="4" height="1" fill="#000"/>
<rect x="368" y="199" width="2" height="1" fill="#40e040"/>
<rect x="370" y="199" width="4" height="1" fill="#000"/>
<rect x="374" y="199" width="2" height="1" fill="#40e040"/>
<rect x="376" y="199" width="4" height="1" fill="#000"/>
<rect x="380" y="199" width="2" height="1" fill="#40e040"/>
<rect x="382" y="199" width="4" height="1" fill="#000"/>
<rect x="386" y="199" width="2" height="1" fill="#40e040"/>
<rect x="388" y="199" width="4" height="1" fill="#000"/>
<rect x="392" y="199" width="2" height="1" fill="#40e040"/>
<rect x="394" y="199" width="4" height="1" fill="#000"/>
<rect x="398" y="199" width="2" height="1" fill="#40e040"/>
<rect x="400" y="199" width="4" height="1" fill="#000"/>
<rect x="404" y="199" width="2" height="1" fill="#40e040"/>
<rect x="406" y="199" width="4" height="1" fill="#000"/>
<rect x="410" y="199" width="2" height="1" fill="#40e040"/>
<rect x="412" y="199" width="4" height="1" fill="#000"/>
<rect x="416" y="199" width="2" height="1" fill="#40e040"/>
<rect x="418" y="199" width="4" height="1" fill="#000"/>
<rect x="422" y="199" width="2" height="1" fill="#40e040"/>
<rect x="424" y="199" width="4" height="1" fill="#000"/>
<rect x="428" y="199" width="2" height="1" fill="#40e040"/>
<rect x="430" y="199" width="4" height="1" fill="#000"/>
<rect x="434" y="199" width="2" height="1" fill="#40e040"/>
<rect x="436" y="199" width="4" height="1" fill="#000"/>
<rect x="440" y="199" width="2" height="1" fill="#40e040"/>
<rect x="442" y="199" width="4" height="1" fill="#000"/>
<rect x="446" y="199" width="2" height="1" fill="#40e040"/>
<rect x="448" y="199" width="4" height="1" fill="#000"/>
<rect x="452" y="199" width="2" height="1" fill="#40e040"/>
<rect x="454" y="199" width="4" height="1" fill="#000"/>
<rect x="458" y="199" width="2" height="1" fill="#40e040"/>
<rect x="460" y="199" width="4" height="1" fill="#000"/>
<rect x="464" y="199" width="2" height="1" fill="#40e040"/>
<rect x="466" y="199" width="4" height="1" fill="#000"/>
<rect x="470" y="199" width="2" height="1" fill="#40e040"/>
<rect x="472" y="199" width="4" height="1" fill="#000"/>
<rect x="476" y="199" width="2" height="1" fill="#40e040"/>
<rect x="478" y="199" width="4" height="1" fill="#000"/>
<rect x="482" y="199" width="2" height="1" fill="#40e040"/>
<rect x="484" y="199" width="4" height="1" fill="#000"/>
<rect x="488" y="199" width="2" height="1" fill="#40e040"/>
<rect x="490" y="199" width="4" height="1" fill="#000"/>
<rect x="494" y="199" width="2" height="1" fill="#40e040"/>
<rect x="496" y="199" width="4" height="1" fill="#000"/>
<rect x="500" y="199" width="2" height="1" fill="#40e040"/>
<rect x="502" y="199" width="4" height="1" fill="#000"/>
<rect x="506" y="199" width="2" height="1" fill="#40e040"/>
<rect x="508" y="199" width="4" height="1" fill="#000"/>
<rect x="512" y="199" width="2" height="1" fill="#40e040"/>
<rect x="514" y="199" width="4" height="1" fill="#000"/>
<rect x="518" y="199" width="2" height="1" fill="#40e040"/>
<rect x="520" y="199" width="3" height="1" fill="#000"/>
<rect x="523" y="198" width="3" height="2" fill="#000"/>
<rect x="526" y="198" width="3" height="2" fill="#62dc62"/>
<rect x="529" y="198" width="3" height="2" fill="#000"/>
<rect x="532" y="198" width="3" height="2" fill="#62dc62"/>
<rect x="535" y="198" width="3" height="2" fill="#000"/>
<rect x="538" y="198" width="3" height="2" fill="#62dc62"/>
<rect x="541" y="198" width="3" height="2" fill="#000"/>
<rect x="544" y="198" width="3" height="2" fill="#62dc62"/>
<rect x="547" y="198" width="3" height="2" fill="#000"/>
<rect x="550" y="198" width="3" height="2" fill="#62dc62"/>
<rect x="553" y="198" width="3" height="2" fill="#000"/>
<rect x="556" y="198" width="3" height="2" fill="#62dc62"/>
<rect x="559" y="198" width="3" height="2" fill="#000"/>
<rect x="562" y="198" width="3" height="2" fill="#62dc62"/>
<rect x="565" y="198" width="3" height="2" fill="#000"/>
<rect x="568" y="198" width="3" height="2" fill="#62dc62"/>
<rect x="571" y="198" width="3" height="2" fill="#000"/>
<rect x="574" y="198" width="3" height="2" fill="#62dc62"/>
<rect x="577" y="198" width="3" height="2" fill="#000"/>
<rect x="580" y="198" width="4" height="1" fill="#000"/>
<rect x="584" y="198" width="2" height="1" fill="#40e040"/>
<rect x="586" y="198" width="4" height="1" fill="#000"/>
<rect x="590" y="198" width="2" height="1" fill="#40e040"/>
<rect x="592" y="198" width="4" height="1" fill="#000"/>
<rect x="596" y="198" width="2" height="1" fill="#40e040"/>
<rect x="598" y="198" width="4" height="1" fill="#000"/>
<rect x="602" y="198" width="2" height="1" fill="#40e040"/>
<rect x="604" y="198" width="4" height="1" fill="#000"/>
<rect x="608" y="198" width="2" height="1" fill="#40e040"/>
<rect x="610" y="198" width="4" height="1" fill="#000"/>
<rect x="614" y="198" width="2" height="1" fill="#40e040"/>
<rect x="616" y="198" width="4" height="1" fill="#000"/>
<rect x="620" y="198" width="2" height="1" fill="#40e040"/>
<rect x="622" y="198" width="4" height="1" fill="#000"/>
<rect x="626" y="198" width="2" height="1" fill="#40e040"/>
<rect x="628" y="198" width="4" height="1" fill="#000"/>
<rect x="632" y="198" width="2" height="1" fill="#40e040"/>
<rect x="634" y="198" width="4" height="1" fill="#000"/>
<rect x="638" y="198" width="2" height="1" fill="#40e040"/>
<rect x="640" y="198" width="4" height="1" fill="#000"/>
<rect x="644" y="198" width="2" height="1" fill="#40e040"/>
<rect x="646" y="198" width="4" height="1" fill="#000"/>
<rect x="650" y="198" width="2" height="1" fill="#40e040"/>
<rect x="652" y="198" width="4" height="1" fill="#000"/>
<rect x="656" y="198" width="2" height="1" fill="#40e040"/>
<rect x="658" y="198" width="4" height="1" fill="#000"/>
<rect x="662" y="198" width="2" height="1" fill="#40e040"/>
<rect x="664" y="198" width="4" height="1" fill="#000"/>
<rect x="668" y="198" width="2" height="1" fill="#40e040"/>
<rect x="670" y="198" width="4" height="1" fill="#000"/>
<rect x="674" y="198" width="2" height="1" fill="#40e040"/>
<rect x="676" y="198" width="4" height="1" fill="#000"/>
<rect x="680" y="198" width="2" height="1" fill="#40e040"/>
<rect x="682" y="198" width="4" height="1" fill="#000"/>
<rect x="686" y="198" width="2" height="1" fill="#40e040"/>
<rect x="688" y="198" width="4" height="1" fill="#000"/>
<rect x="15" y="201" width="1" height="25" fill="#bc74c4"/>
<rect x="16" y="201" width="2" height="25" fill="#5c0878"/>
<rect x="690" y="197" width="1" height="28" fill="#1818b0"/>
<rect x="691" y="197" width="1" height="28" fill="#900070"/>
</g>
<rect x="691" y="82" width="1" height="3" fill="#0000a8"/>
<rect x="691" y="88" width="1" height="3" fill="#0000a8"/>
<rect x="691" y="94" width="1" height="3" fill="#0000a8"/>
<rect x="691" y="100" width="1" height="3" fill="#0000a8"/>
<rect x="691" y="106" width="1" height="3" fill="#0000a8"/>
<rect x="691" y="112" width="1" height="3" fill="#0000a8"/>
<rect x="691" y="118" width="1" height="3" fill="#0000a8"/>
<rect x="691" y="124" width="1" height="3" fill="#0000a8"/>
<rect x="691" y="130" width="1" height="3" fill="#0000a8"/>
<rect x="691" y="136" width="1" height="3" fill="#0000a8"/>
<rect x="691" y="142" width="1" height="3" fill="#0000a8"/>
<rect x="691" y="148" width="1" height="3" fill="#0000a8"/>
<rect x="691" y="154" width="1" height="3" fill="#0000a8"/>
<rect x="691" y="160" width="1" height="3" fill="#0000a8"/>
<rect x="691" y="166" width="1" height="3" fill="#0000a8"/>
<rect x="691" y="172" width="1" height="3" fill="#0000a8"/>
<rect x="691" y="178" width="1" height="3" fill="#0000a8"/>
<rect x="691" y="184" width="1" height="3" fill="#0000a8"/>
<rect x="691" y="190" width="1" height="3" fill="#0000a8"/>
<rect x="691" y="196" width="1" height="3" fill="#0000a8"/>
<rect x="691" y="202" width="1" height="3" fill="#0000a8"/>
<rect x="691" y="208" width="1" height="3" fill="#0000a8"/>
<rect x="691" y="214" width="1" height="3" fill="#0000a8"/>
<rect x="691" y="220" width="1" height="3" fill="#0000a8"/>
<rect x="691" y="226" width="1" height="3" fill="#0000a8"/>
<rect x="691" y="232" width="1" height="3" fill="#0000a8"/>
<rect x="691" y="238" width="1" height="3" fill="#0000a8"/>
</svg>
<div class="a" style="left:284px;top:81px;width:139px;height:13px;background:#f0f0f0"></div>
<div class="gb" style="left:11px;top:253px;width:339px;height:190px"></div>
<div class="gb" style="left:356px;top:253px;width:339px;height:190px"></div>
<div class="gb" style="left:11px;top:453px;width:339px;height:50px"></div>
<div class="gb" style="left:356px;top:453px;width:339px;height:50px"></div>
<div class="cap" style="left:18px;top:247px;width:198px"></div>
<div class="cap" style="left:363px;top:247px;width:182px"></div>
<div class="cap" style="left:18px;top:447px;width:22px"></div>
<div class="cap" style="left:363px;top:447px;width:86px"></div>
<div class="a" style="left:19px;top:268px;width:277px;height:10px;background:#f0f0f0;border:1px solid;border-color:#a0a0a0 #fff #fff #a0a0a0;box-shadow:inset 1px 1px 0 #696969, inset -1px -1px 0 #e3e3e3"></div>
<div class="a" style="left:23.9px;top:271px;width:17.8px;height:4px;background:#20de20"></div>
<div class="a" style="left:46.3px;top:271px;width:17.8px;height:4px;background:#20de20"></div>
<div class="a" style="left:68.7px;top:271px;width:17.8px;height:4px;background:#20de20"></div>
<div class="a" style="left:91.1px;top:271px;width:17.8px;height:4px;background:#20de20"></div>
<div class="a" style="left:113.5px;top:271px;width:17.8px;height:4px;background:#20de20"></div>
<div class="a" style="left:135.9px;top:271px;width:17.8px;height:4px;background:#20de20"></div>
<div class="a" style="left:158.3px;top:271px;width:17.8px;height:4px;background:#20de20"></div>
<div class="a" style="left:180.7px;top:271px;width:17.8px;height:4px;background:#20de20"></div>
<div class="a" style="left:203.1px;top:271px;width:17.8px;height:4px;background:#20de20"></div>
<div class="a" style="left:225.5px;top:271px;width:17.8px;height:4px;background:#e01414"></div>
<div class="a" style="left:247.9px;top:271px;width:17.8px;height:4px;background:#e01414"></div>
<div class="a" style="left:270.3px;top:271px;width:17.8px;height:4px;background:#e01414"></div>
<div class="sunk" style="left:19px;top:284px;width:324px;height:21px"></div><div class="btn" style="left:325px;top:286px;width:17px;height:17px"></div><svg class="a" style="left:330px;top:293px" width="7" height="4" viewBox="0 0 7 4" shape-rendering="crispEdges"><path d="M0 0h7v1h-7zM1 1h5v1h-5zM2 2h3v1h-3zM3 3h1v1h-1z" fill="#000"/></svg>
<div class="sunk" style="left:159px;top:324px;width:184px;height:21px"></div><div class="btn" style="left:325px;top:326px;width:17px;height:17px"></div><svg class="a" style="left:330px;top:333px" width="7" height="4" viewBox="0 0 7 4" shape-rendering="crispEdges"><path d="M0 0h7v1h-7zM1 1h5v1h-5zM2 2h3v1h-3zM3 3h1v1h-1z" fill="#000"/></svg>
<div class="sunk" style="left:158px;top:414px;width:52px;height:19px;background:#fff"></div>
<div class="btn" style="left:218px;top:414px;width:19px;height:19px"></div>
<div class="btn" style="left:243px;top:414px;width:19px;height:19px"></div>
<div class="btn" style="left:270px;top:411px;width:73px;height:27px"></div>
<div class="a" style="left:364px;top:268px;width:277px;height:10px;background:#f0f0f0;border:1px solid;border-color:#a0a0a0 #fff #fff #a0a0a0;box-shadow:inset 1px 1px 0 #696969, inset -1px -1px 0 #e3e3e3"></div>
<div class="a" style="left:368.9px;top:271px;width:17.8px;height:4px;background:#20de20"></div>
<div class="a" style="left:391.3px;top:271px;width:17.8px;height:4px;background:#20de20"></div>
<div class="a" style="left:413.7px;top:271px;width:17.8px;height:4px;background:#20de20"></div>
<div class="a" style="left:436.1px;top:271px;width:17.8px;height:4px;background:#20de20"></div>
<div class="a" style="left:458.5px;top:271px;width:17.8px;height:4px;background:#20de20"></div>
<div class="a" style="left:480.9px;top:271px;width:17.8px;height:4px;background:#20de20"></div>
<div class="a" style="left:503.3px;top:271px;width:17.8px;height:4px;background:#20de20"></div>
<div class="a" style="left:525.7px;top:271px;width:17.8px;height:4px;background:#20de20"></div>
<div class="a" style="left:548.1px;top:271px;width:17.8px;height:4px;background:#20de20"></div>
<div class="a" style="left:570.5px;top:271px;width:17.8px;height:4px;background:#e01414"></div>
<div class="a" style="left:592.9px;top:271px;width:17.8px;height:4px;background:#e01414"></div>
<div class="a" style="left:615.3px;top:271px;width:17.8px;height:4px;background:#e01414"></div>
<div class="sunk" style="left:364px;top:284px;width:324px;height:21px"></div><div class="btn" style="left:670px;top:286px;width:17px;height:17px"></div><svg class="a" style="left:675px;top:293px" width="7" height="4" viewBox="0 0 7 4" shape-rendering="crispEdges"><path d="M0 0h7v1h-7zM1 1h5v1h-5zM2 2h3v1h-3zM3 3h1v1h-1z" fill="#000"/></svg>
<div class="sunk" style="left:504px;top:324px;width:184px;height:21px"></div><div class="btn" style="left:670px;top:326px;width:17px;height:17px"></div><svg class="a" style="left:675px;top:333px" width="7" height="4" viewBox="0 0 7 4" shape-rendering="crispEdges"><path d="M0 0h7v1h-7zM1 1h5v1h-5zM2 2h3v1h-3zM3 3h1v1h-1z" fill="#000"/></svg>
<div class="sunk" style="left:503px;top:414px;width:52px;height:19px;background:#a0ffa0"></div>
<div class="btn" style="left:563px;top:414px;width:19px;height:19px"></div>
<div class="btn" style="left:588px;top:414px;width:19px;height:19px"></div>
<div class="btn" style="left:615px;top:411px;width:73px;height:27px"></div>
<div class="btn" style="left:323px;top:374px;width:19px;height:19px"></div>
<div class="btn" style="left:668px;top:358px;width:19px;height:19px"></div>
<div class="sunk" style="left:19px;top:472px;width:324px;height:21px"></div><div class="btn" style="left:325px;top:474px;width:17px;height:17px"></div><svg class="a" style="left:330px;top:481px" width="7" height="4" viewBox="0 0 7 4" shape-rendering="crispEdges"><path d="M0 0h7v1h-7zM1 1h5v1h-5zM2 2h3v1h-3zM3 3h1v1h-1z" fill="#000"/></svg>
<div class="sunk" style="left:444px;top:471px;width:80px;height:19px"></div>
<div class="sunk" style="left:607px;top:471px;width:80px;height:19px"></div>
<svg class="a" style="left:8px;top:7px" width="16" height="16" viewBox="0 0 16 16" shape-rendering="crispEdges">
<rect width="16" height="16" fill="#c0c0c0"/>
<path d="M0 3h7v1h-7zM1 4h1v1h-1zM5 4h1v1h-1zM2 5h1v1h-1zM4 5h1v1h-1zM3 6h1v8h-1z" fill="#000"/>
<path d="M2 4h3v1h-3zM3 5h1v1h-1z" fill="#20e020"/>
<path d="M9 2h7v1h-7zM10 3h1v1h-1zM14 3h1v1h-1zM11 4h1v1h-1zM13 4h1v1h-1zM12 5h1v8h-1z" fill="#000"/>
<path d="M11 3h3v1h-3zM12 4h1v1h-1z" fill="#20e020"/>
<path d="M5 8.8L7.1 7.1L7.3 10.2L10.9 6.8" fill="none" stroke="#000" stroke-width="1.3" shape-rendering="auto"/>
</svg>
<svg width="709" height="517" viewBox="0 0 709 517" style="position:absolute;left:0;top:0;will-change:transform">
<text id="ttl" x="29.2" y="19" font-size="12" stroke="#000" stroke-width=".25" textLength="55.5" lengthAdjust="spacingAndGlyphs" style="text-shadow:0 0 4px #fff,0 0 6px #fff">Radio Link</text>
<text x="15" y="44" font-size="12" textLength="19.6" lengthAdjust="spacingAndGlyphs"><tspan text-decoration="underline">E</tspan>dit</text>
<text x="48.8" y="44" font-size="12" textLength="25.6" lengthAdjust="spacingAndGlyphs"><tspan text-decoration="underline">V</tspan>iew</text>
<text x="88" y="44" font-size="12" textLength="28" lengthAdjust="spacingAndGlyphs">S<tspan text-decoration="underline">w</tspan>ap</text>
<text transform="translate(677.3 14) scale(1.16 1)" x="0" y="0" font-size="16" font-weight="bold" text-anchor="middle" fill="#fff" stroke="#5a4040" stroke-width="1" paint-order="stroke">x</text>
<text class="m" id="t0" x="16.7" y="63" font-size="12.5" fill="#000" stroke="#000" textLength="69.2" lengthAdjust="spacingAndGlyphs">Azimuth=1,99°</text>
<text class="m" id="t1" x="17.5" y="77" font-size="12.5" fill="#000" stroke="#000" textLength="89.1" lengthAdjust="spacingAndGlyphs">PathLoss=154,7dB</text>
<text class="m" id="t2" x="153.8" y="63" font-size="12.5" fill="#000" stroke="#000" textLength="93.0" lengthAdjust="spacingAndGlyphs">Elev. angle=-0,122°</text>
<text class="m" id="t3" x="153.8" y="77" font-size="12.5" fill="#000" stroke="#000" textLength="96.3" lengthAdjust="spacingAndGlyphs">E field=54,6dBµV/m</text>
<text class="m" id="t4" x="289.6" y="63" font-size="12.5" fill="#000" stroke="#000" textLength="109.8" lengthAdjust="spacingAndGlyphs">Obstruction at 15,27km</text>
<text class="m" id="t5" x="289.6" y="77" font-size="12.5" fill="#000" stroke="#000" textLength="88.9" lengthAdjust="spacingAndGlyphs">Rx level=-67,3dBm</text>
<text class="m" id="t6" x="424.9" y="63" font-size="12.5" fill="#000" stroke="#000" textLength="99.6" lengthAdjust="spacingAndGlyphs">Worst Fresnel=-0,0F1</text>
<text class="m" id="t7" x="424.9" y="77" font-size="12.5" fill="#000" stroke="#000" textLength="83.5" lengthAdjust="spacingAndGlyphs">Rx level=97,03µV</text>
<text class="m" id="t8" x="560.3" y="63" font-size="12.5" fill="#000" stroke="#000" textLength="89.9" lengthAdjust="spacingAndGlyphs">Distance=30,00km</text>
<text class="m" id="t9" x="560.3" y="77" font-size="12.5" fill="#000" stroke="#000" textLength="95.0" lengthAdjust="spacingAndGlyphs">Rx Relative=26,7dB</text>
<text class="m" id="t10" x="285.5" y="92" font-size="12.5" fill="#000" stroke="#000" textLength="137.2" lengthAdjust="spacingAndGlyphs">01°08'41,9"S 048°27'52,2"W</text>
<text class="m" id="t11" x="20.3" y="258" font-size="12.5" fill="#000" stroke="#000" textLength="194.3" lengthAdjust="spacingAndGlyphs">Transmitter 01°24'53,3"S 048°28'26,0"W</text>
<text class="m" id="t12" x="306.9" y="277" font-size="12.5" fill="#000" stroke="#000" textLength="32.1" lengthAdjust="spacingAndGlyphs">S9+30</text>
<text class="m" id="t13" x="23.0" y="299" font-size="12.5" fill="#000" stroke="#000" textLength="11.2" lengthAdjust="spacingAndGlyphs">p1</text>
<text class="m" id="t14" x="19.0" y="318.5" font-size="12.5" fill="#000" stroke="#000" textLength="22.5" lengthAdjust="spacingAndGlyphs">Role</text>
<text class="m" id="t15" x="159.6" y="318.5" font-size="12.5" fill="#000080" stroke="#000080" textLength="46.9" lengthAdjust="spacingAndGlyphs">Command</text>
<text class="m" id="t16" x="19.0" y="338" font-size="12.5" fill="#000" stroke="#000" textLength="76.9" lengthAdjust="spacingAndGlyphs">Tx system name</text>
<text class="m" id="t17" x="163.4" y="338.5" font-size="12.5" fill="#000" stroke="#000" textLength="80.2" lengthAdjust="spacingAndGlyphs">Rocket M5 5g34</text>
<text class="m" id="t18" x="19.0" y="357" font-size="12.5" fill="#000" stroke="#000" textLength="44.5" lengthAdjust="spacingAndGlyphs">Tx power</text>
<text class="m" id="t19" x="159.6" y="357" font-size="12.5" fill="#000080" stroke="#000080" textLength="45.8" lengthAdjust="spacingAndGlyphs">0,5012 W</text>
<text class="m" id="t20" x="259.4" y="357" font-size="12.5" fill="#000080" stroke="#000080" textLength="36.5" lengthAdjust="spacingAndGlyphs">27 dBm</text>
<text class="m" id="t21" x="19.0" y="373" font-size="12.5" fill="#000" stroke="#000" textLength="41.9" lengthAdjust="spacingAndGlyphs">Line loss</text>
<text class="m" id="t22" x="159.6" y="373" font-size="12.5" fill="#000080" stroke="#000080" textLength="29.9" lengthAdjust="spacingAndGlyphs">0,5 dB</text>
<text class="m" id="t23" x="19.0" y="389" font-size="12.5" fill="#000" stroke="#000" textLength="63.9" lengthAdjust="spacingAndGlyphs">Antenna gain</text>
<text class="m" id="t24" x="159.6" y="389" font-size="12.5" fill="#000080" stroke="#000080" textLength="39.2" lengthAdjust="spacingAndGlyphs">30,7 dBi</text>
<text class="m" id="t25" x="259.4" y="389" font-size="12.5" fill="#000080" stroke="#000080" textLength="43.5" lengthAdjust="spacingAndGlyphs">28,6 dBd</text>
<text class="m" id="t26" x="19.0" y="404.5" font-size="12.5" fill="#000" stroke="#000" textLength="75.5" lengthAdjust="spacingAndGlyphs">Radiated power</text>
<text class="m" id="t27" x="159.6" y="404.5" font-size="12.5" fill="#000080" stroke="#000080" textLength="77.6" lengthAdjust="spacingAndGlyphs">EIRP=524,81 W</text>
<text class="m" id="t28" x="259.4" y="404.5" font-size="12.5" fill="#000080" stroke="#000080" textLength="74.7" lengthAdjust="spacingAndGlyphs">ERP=320,01 W</text>
<text class="m" id="t29" x="18.5" y="428.5" font-size="12.5" fill="#000" stroke="#000" textLength="90.7" lengthAdjust="spacingAndGlyphs">Antenna height (m)</text>
<text class="m" id="t30" x="161.1" y="427.5" font-size="12.5" fill="#000" stroke="#000" textLength="13.1" lengthAdjust="spacingAndGlyphs">24</text>
<text class="m" id="t31" x="292.9" y="427.5" font-size="12.5" fill="#000" stroke="#000" textLength="27.0" lengthAdjust="spacingAndGlyphs">Undo</text>
<text class="m" id="t32" x="365.0" y="258" font-size="12.5" fill="#000" stroke="#000" textLength="186.0" lengthAdjust="spacingAndGlyphs">Receiver 01°08'41,9"S 048°27'52,2"W</text>
<text class="m" id="t33" x="652.1" y="277" font-size="12.5" fill="#000" stroke="#000" textLength="32.1" lengthAdjust="spacingAndGlyphs">S9+30</text>
<text class="m" id="t34" x="368.2" y="299" font-size="12.5" fill="#000" stroke="#000" textLength="12.8" lengthAdjust="spacingAndGlyphs">p2</text>
<text class="m" id="t35" x="364.2" y="318.5" font-size="12.5" fill="#000" stroke="#000" textLength="22.5" lengthAdjust="spacingAndGlyphs">Role</text>
<text class="m" id="t36" x="504.8" y="318.5" font-size="12.5" fill="#000080" stroke="#000080" textLength="46.9" lengthAdjust="spacingAndGlyphs">Command</text>
<text class="m" id="t37" x="364.5" y="338" font-size="12.5" fill="#000" stroke="#000" textLength="77.2" lengthAdjust="spacingAndGlyphs">Rx system name</text>
<text class="m" id="t38" x="508.6" y="338.5" font-size="12.5" fill="#000" stroke="#000" textLength="80.2" lengthAdjust="spacingAndGlyphs">Rocket M5 5g34</text>
<text class="m" id="t39" x="364.5" y="356.5" font-size="12.5" fill="#000" stroke="#000" textLength="78.5" lengthAdjust="spacingAndGlyphs">Required E Field</text>
<text class="m" id="t40" x="504.1" y="356.5" font-size="12.5" fill="#000080" stroke="#000080" textLength="70.2" lengthAdjust="spacingAndGlyphs">27,82 dBµV/m</text>
<text class="m" id="t41" x="364.2" y="372.5" font-size="12.5" fill="#000" stroke="#000" textLength="63.9" lengthAdjust="spacingAndGlyphs">Antenna gain</text>
<text class="m" id="t42" x="504.8" y="372.5" font-size="12.5" fill="#000080" stroke="#000080" textLength="39.2" lengthAdjust="spacingAndGlyphs">30,7 dBi</text>
<text class="m" id="t43" x="604.6" y="372.5" font-size="12.5" fill="#000080" stroke="#000080" textLength="43.3" lengthAdjust="spacingAndGlyphs">28,6 dBd</text>
<text class="m" id="t44" x="364.2" y="388.5" font-size="12.5" fill="#000" stroke="#000" textLength="41.9" lengthAdjust="spacingAndGlyphs">Line loss</text>
<text class="m" id="t45" x="504.8" y="388.5" font-size="12.5" fill="#000080" stroke="#000080" textLength="29.9" lengthAdjust="spacingAndGlyphs">0,5 dB</text>
<text class="m" id="t46" x="364.5" y="404.5" font-size="12.5" fill="#000" stroke="#000" textLength="61.0" lengthAdjust="spacingAndGlyphs">Rx sensitivity</text>
<text class="m" id="t47" x="504.1" y="404.5" font-size="12.5" fill="#000080" stroke="#000080" textLength="46.0" lengthAdjust="spacingAndGlyphs">4,4668µV</text>
<text class="m" id="t48" x="604.6" y="404.5" font-size="12.5" fill="#000080" stroke="#000080" textLength="39.2" lengthAdjust="spacingAndGlyphs">-94 dBm</text>
<text class="m" id="t49" x="363.7" y="428.5" font-size="12.5" fill="#000" stroke="#000" textLength="90.7" lengthAdjust="spacingAndGlyphs">Antenna height (m)</text>
<text class="m" id="t50" x="506.3" y="427.5" font-size="12.5" fill="#000" stroke="#000" textLength="13.1" lengthAdjust="spacingAndGlyphs">24</text>
<text class="m" id="t51" x="638.1" y="427.5" font-size="12.5" fill="#000" stroke="#000" textLength="27.0" lengthAdjust="spacingAndGlyphs">Undo</text>
<text class="m" id="t52" x="20.5" y="458" font-size="12.5" fill="#000" stroke="#000" textLength="17.5" lengthAdjust="spacingAndGlyphs">Net</text>
<text class="m" id="t53" x="23.0" y="487" font-size="12.5" fill="#000" stroke="#000" textLength="26.7" lengthAdjust="spacingAndGlyphs">P1P2</text>
<text class="m" id="t54" x="365.2" y="458" font-size="12.5" fill="#000" stroke="#000" textLength="82.1" lengthAdjust="spacingAndGlyphs">Frequency (MHz)</text>
<text class="m" id="t55" x="396.1" y="482" font-size="12.5" fill="#000" stroke="#000" textLength="41.7" lengthAdjust="spacingAndGlyphs">Minimum</text>
<text class="m" id="t56" x="448.0" y="484.5" font-size="12.5" fill="#000" stroke="#000" textLength="23.8" lengthAdjust="spacingAndGlyphs">5180</text>
<text class="m" id="t57" x="551.5" y="482" font-size="12.5" fill="#000" stroke="#000" textLength="44.3" lengthAdjust="spacingAndGlyphs">Maximum</text>
<text class="m" id="t58" x="610.5" y="484.5" font-size="12.5" fill="#000" stroke="#000" textLength="24.0" lengthAdjust="spacingAndGlyphs">5825</text>
<text class="g" x="228" y="425.7" font-size="8" text-anchor="middle">-</text>
<text class="g" x="252.5" y="427" font-size="9.5" text-anchor="middle">+</text>
<text class="g" x="573" y="425.7" font-size="8" text-anchor="middle">-</text>
<text class="g" x="597.5" y="427" font-size="9.5" text-anchor="middle">+</text>
<text class="g" x="332.5" y="386.6" font-size="9.5" text-anchor="middle">+</text>
<text class="g" x="677.5" y="370.6" font-size="9.5" text-anchor="middle">+</text>
</svg>
</body></html>
